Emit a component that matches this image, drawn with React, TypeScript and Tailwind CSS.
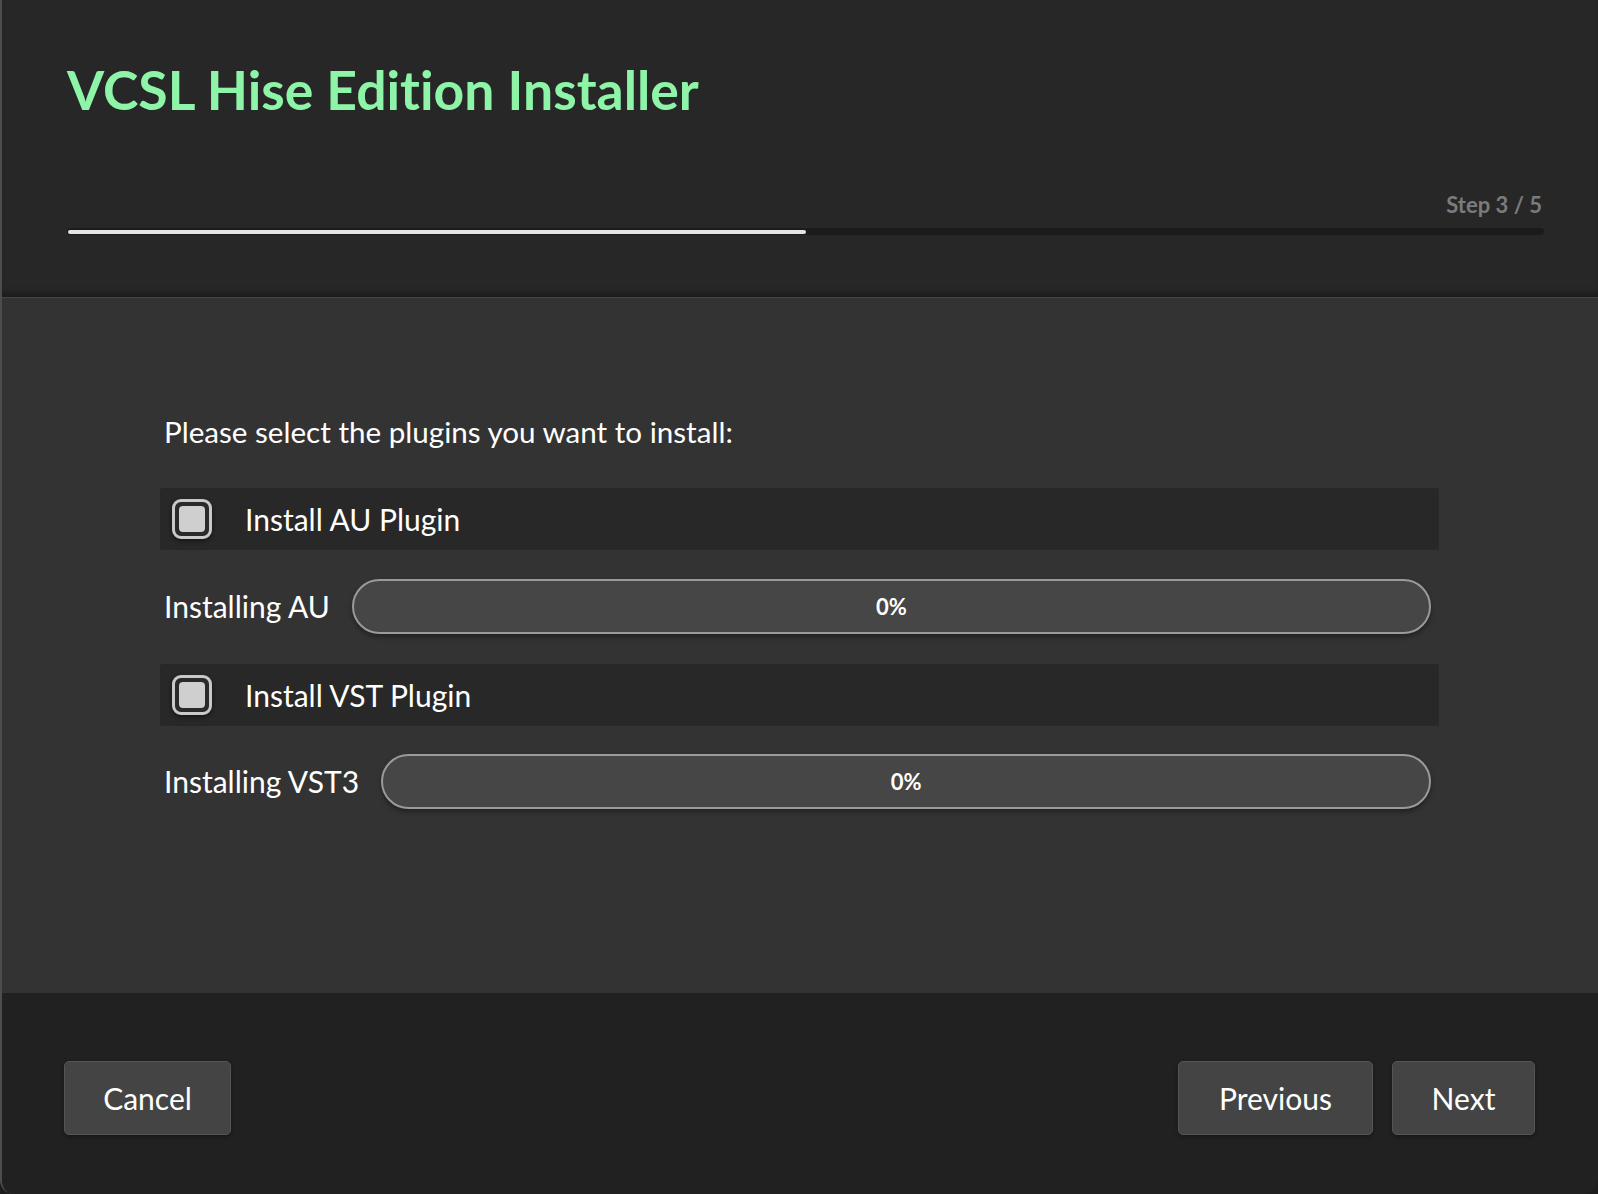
import React from "react";

function Checkbox() {
    return (
        <div className="w-[40px] h-[40px] rounded-[9px] border-[3px] border-[#c9c9c9] bg-[#2a2a2a] flex items-center justify-center shadow-[0_2px_4px_rgba(0,0,0,0.5)]">
            <div className="w-[26px] h-[26px] rounded-[4px] bg-[#cfcfcf]" />
        </div>
    )
}

function PluginRow({ label }: { label: string }) {
    return (
        <div className="h-[62px] bg-[#282828] rounded-[3px] flex items-center pl-[12px] gap-[33px]">
            <Checkbox />
            <span className="text-[30px] text-white">{label}</span>
        </div>
    )
}

function ProgressRow({ label, value }: { label: string; value: number }) {
    return (
        <div className="flex items-center gap-[22px] pl-[4px] pr-[8px]">
            <span className="text-[30px] text-white whitespace-nowrap">{label}</span>
            <div className="flex-1 h-[55px] rounded-full border-2 border-[#9a9a9a] bg-[#464646] shadow-[0_3px_5px_rgba(0,0,0,0.35)] flex items-center justify-center">
                <span className="text-[22px] font-bold text-white">{value}%</span>
            </div>
        </div>
    )
}

function Button({ children, className = "" }: { children: React.ReactNode; className?: string }) {
    return (
        <button className={"h-[74px] rounded-[5px] bg-[#444444] border border-[#555555] text-white text-[30px] shadow-[0_2px_4px_rgba(0,0,0,0.3)] " + className}>
            {children}
        </button>
    )
}

export default function App() {
    return (
        <div className="w-full h-[1194px] bg-[#1d1d1d] overflow-hidden [font-variant-ligatures:none]" style={{ fontFamily: "Lato, 'Open Sans', sans-serif" }}>
            <div className="h-full flex flex-col border-l-2 border-[#4d4d4d] rounded-b-[14px] overflow-hidden">
                {/* Header */}
                <div className="h-[298px] shrink-0 bg-[#272727] border-b border-[#454545] shadow-[inset_0_-8px_10px_-6px_rgba(0,0,0,0.45)] flex flex-col pl-[65px] pr-[54px]">
                    <h1 className="pt-[63px] text-[53.5px] leading-none font-bold text-[#8ef5a8]">VCSL Hise Edition Installer</h1>
                    <div className="mt-auto pb-[62px] flex flex-col">
                        <span className="self-end text-[22px] font-bold text-[#7b7b7b] leading-none pr-[2px] mb-[12px]">Step 3 / 5</span>
                        <div className="h-[7px] rounded-full bg-[#1b1b1b] flex items-center px-[1px]">
                            <div className="h-[4px] w-1/2 rounded-full bg-[#e4e4e4]" />
                        </div>
                    </div>
                </div>

                {/* Content */}
                <div className="flex-1 bg-[#333333] pl-[158px] pr-[159px] pt-[116px]">
                    <p className="pl-[4px] text-[29.6px] leading-[36px] text-white">Please select the plugins you want to install:</p>
                    <div className="mt-[38px] flex flex-col">
                        <PluginRow label="Install AU Plugin" />
                        <div className="mt-[29px]"><ProgressRow label="Installing AU" value={0} /></div>
                        <div className="mt-[30px]"><PluginRow label="Install VST Plugin" /></div>
                        <div className="mt-[28px]"><ProgressRow label="Installing VST3" value={0} /></div>
                    </div>
                </div>

                {/* Footer */}
                <div className="h-[201px] shrink-0 bg-[#212121] flex items-start justify-between pl-[62px] pr-[63px] pt-[68px]">
                    <Button className="w-[167px]">Cancel</Button>
                    <div className="flex gap-[19px]">
                        <Button className="w-[195px]">Previous</Button>
                        <Button className="w-[143px]">Next</Button>
                    </div>
                </div>
            </div>
        </div>
    )
}
